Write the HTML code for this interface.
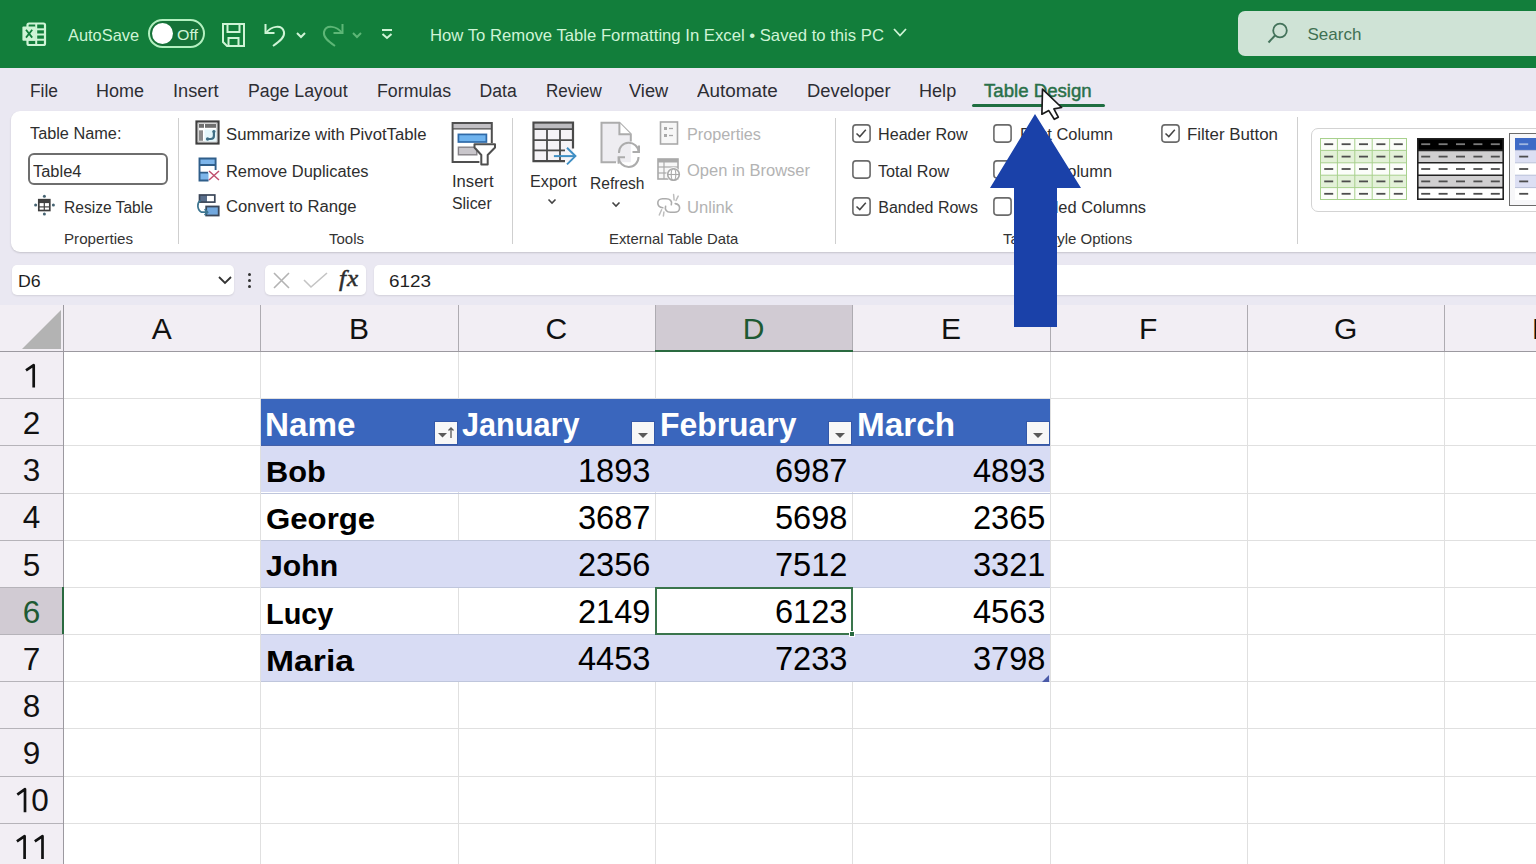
<!DOCTYPE html>
<html><head><meta charset="utf-8">
<style>
*{margin:0;padding:0;box-sizing:border-box}
html,body{width:1536px;height:864px;overflow:hidden;background:#fff;font-family:"Liberation Sans",sans-serif}
.a{position:absolute;white-space:nowrap}
svg.a{overflow:visible}
</style></head><body>
<div class="a" style="left:0;top:0;width:1536px;height:68px;background:#127e3b"></div>
<div class="a" style="left:0;top:68px;width:1536px;height:237px;background:#eae8f2"></div>
<div class="a" style="left:11px;top:111px;width:1560px;height:141px;background:#fff;border-radius:9px;box-shadow:0 1px 2px rgba(0,0,0,.16)"></div>
<svg class="a" style="left:20px;top:20px;" width="30" height="30" viewBox="0 0 30 30"><rect x="7.5" y="3.5" width="17.5" height="21.5" rx="1.5" fill="none" stroke="#cff4d6" stroke-width="2.2"/>
<line x1="7" y1="9.3" x2="25" y2="9.3" stroke="#cff4d6" stroke-width="2"/><line x1="7" y1="14.5" x2="25" y2="14.5" stroke="#cff4d6" stroke-width="2"/><line x1="7" y1="19.7" x2="25" y2="19.7" stroke="#cff4d6" stroke-width="2"/>
<line x1="16.2" y1="3" x2="16.2" y2="25" stroke="#cff4d6" stroke-width="2"/>
<rect x="2.4" y="6.6" width="13.4" height="14.2" rx="1" fill="#cff4d6"/>
<path d="M6 9.8 L12.2 17.6 M12.2 9.8 L6 17.6" stroke="#127e3b" stroke-width="1.8"/></svg>
<div class="a" style="left:68.00px;top:26.62px;font-size:16.4px;line-height:16.4px;color:#cff4d6;">AutoSave</div>
<div class="a" style="left:148px;top:19px;width:57px;height:29px;border:2px solid #b3f0c0;border-radius:15px;background:#157238"></div>
<div class="a" style="left:152px;top:23px;width:21px;height:21px;border-radius:50%;background:#fff"></div>
<div class="a" style="left:177.00px;top:27.18px;font-size:15.5px;line-height:15.5px;color:#cff4d6;transform:scaleX(1.0300);transform-origin:0 0;">Off</div>
<svg class="a" style="left:220px;top:21px;" width="28" height="28" viewBox="0 0 28 28"><path d="M3 3 H24 V25 H7 L3 21 Z" fill="none" stroke="#cff4d6" stroke-width="2"/><path d="M7.5 3 V11 H19.5 V3" fill="none" stroke="#cff4d6" stroke-width="2"/><path d="M8.5 25 V17 H18.5 V25" fill="none" stroke="#cff4d6" stroke-width="2"/></svg>
<svg class="a" style="left:262px;top:21px;" width="28" height="28" viewBox="0 0 28 28"><path d="M3.5 3 V12 H12.5" fill="none" stroke="#cff4d6" stroke-width="2"/><path d="M4 12 C9 5 20 3 22 11 C23 16 18 20 11 25" fill="none" stroke="#cff4d6" stroke-width="2"/></svg>
<svg class="a" style="left:294px;top:30px;" width="14" height="10" viewBox="0 0 14 10"><path d="M3 3 L7 7 L11 3" fill="none" stroke="#cff4d6" stroke-width="2"/></svg>
<svg class="a" style="left:319px;top:21px;" width="28" height="28" viewBox="0 0 28 28"><path d="M23.5 3 V12 H14.5" fill="none" stroke="#5db676" stroke-width="2"/><path d="M23 12 C18 5 7 3 5 11 C4 16 9 20 16 25" fill="none" stroke="#5db676" stroke-width="2"/></svg>
<svg class="a" style="left:350px;top:30px;" width="14" height="10" viewBox="0 0 14 10"><path d="M3 3 L7 7 L11 3" fill="none" stroke="#5db676" stroke-width="2"/></svg>
<svg class="a" style="left:379px;top:27px;" width="16" height="14" viewBox="0 0 16 14"><line x1="3" y1="3" x2="13" y2="3" stroke="#cff4d6" stroke-width="2"/><path d="M3.5 7 L8 11 L12.5 7" fill="none" stroke="#cff4d6" stroke-width="2"/></svg>
<div class="a" style="left:430.00px;top:26.63px;font-size:16.5px;line-height:16.5px;color:#cff4d6;transform:scaleX(1.0110);transform-origin:0 0;">How To Remove Table Formatting In Excel • Saved to this PC</div>
<svg class="a" style="left:891px;top:26px;" width="18" height="14" viewBox="0 0 18 14"><path d="M3 3 L9 9.5 L15 3" fill="none" stroke="#cff4d6" stroke-width="1.8"/></svg>
<div class="a" style="left:1238px;top:11px;width:320px;height:45px;background:#cfe3d6;border-radius:7px"></div>
<svg class="a" style="left:1264px;top:20px;" width="28" height="28" viewBox="0 0 28 28"><circle cx="16" cy="10.5" r="6.8" fill="none" stroke="#43725a" stroke-width="1.8"/><line x1="11" y1="15.5" x2="4.5" y2="22.5" stroke="#43725a" stroke-width="2"/></svg>
<div class="a" style="left:1307.50px;top:25.91px;font-size:17px;line-height:17px;color:#3f7052;">Search</div>
<div class="a" style="left:30.00px;top:82.90px;font-size:17.6px;line-height:17.6px;color:#2d2d33;transform:scaleX(0.9873);transform-origin:0 0;">File</div>
<div class="a" style="left:96.40px;top:82.90px;font-size:17.6px;line-height:17.6px;color:#2d2d33;transform:scaleX(1.0224);transform-origin:0 0;">Home</div>
<div class="a" style="left:173.00px;top:82.90px;font-size:17.6px;line-height:17.6px;color:#2d2d33;transform:scaleX(1.0337);transform-origin:0 0;">Insert</div>
<div class="a" style="left:248.00px;top:82.90px;font-size:17.6px;line-height:17.6px;color:#2d2d33;transform:scaleX(1.0077);transform-origin:0 0;">Page Layout</div>
<div class="a" style="left:376.60px;top:82.90px;font-size:17.6px;line-height:17.6px;color:#2d2d33;transform:scaleX(1.0102);transform-origin:0 0;">Formulas</div>
<div class="a" style="left:479.50px;top:82.90px;font-size:17.6px;line-height:17.6px;color:#2d2d33;">Data</div>
<div class="a" style="left:545.50px;top:82.90px;font-size:17.6px;line-height:17.6px;color:#2d2d33;transform:scaleX(0.9669);transform-origin:0 0;">Review</div>
<div class="a" style="left:628.90px;top:82.90px;font-size:17.6px;line-height:17.6px;color:#2d2d33;transform:scaleX(1.0362);transform-origin:0 0;">View</div>
<div class="a" style="left:696.60px;top:82.90px;font-size:17.6px;line-height:17.6px;color:#2d2d33;transform:scaleX(1.0725);transform-origin:0 0;">Automate</div>
<div class="a" style="left:806.90px;top:82.90px;font-size:17.6px;line-height:17.6px;color:#2d2d33;transform:scaleX(1.0433);transform-origin:0 0;">Developer</div>
<div class="a" style="left:919.30px;top:82.90px;font-size:17.6px;line-height:17.6px;color:#2d2d33;transform:scaleX(1.0277);transform-origin:0 0;">Help</div>
<div class="a" style="left:984.30px;top:82.90px;font-size:17.6px;line-height:17.6px;color:#2a7049;transform:scaleX(1.0584);transform-origin:0 0;-webkit-text-stroke:0.45px #2a7049;">Table Design</div>
<div class="a" style="left:972px;top:104px;width:133px;height:3px;background:#1f6e41;border-radius:2px"></div>
<div class="a" style="left:29.60px;top:126.46px;font-size:16px;line-height:16px;color:#2e2e2e;transform:scaleX(1.0176);transform-origin:0 0;">Table Name:</div>
<div class="a" style="left:28px;top:153px;width:140px;height:32px;border:2px solid #6e6e6e;border-radius:6px;background:#fff"></div>
<div class="a" style="left:33.20px;top:163.86px;font-size:16px;line-height:16px;color:#2e2e2e;transform:scaleX(1.0265);transform-origin:0 0;">Table4</div>
<svg class="a" style="left:32px;top:193px;" width="24" height="24" viewBox="0 0 24 24"><rect x="6.8" y="6.7" width="11" height="10.8" fill="#fff" stroke="#3f3f3f" stroke-width="1.7"/><rect x="6.8" y="6.7" width="11" height="3.4" fill="#3f3f3f"/><line x1="6.8" y1="13.9" x2="17.8" y2="13.9" stroke="#3f3f3f" stroke-width="1.2"/><line x1="12.3" y1="9.5" x2="12.3" y2="17.5" stroke="#3f3f3f" stroke-width="1.2"/><circle cx="12.4" cy="3.2" r="1.5" fill="#466473"/><circle cx="12.4" cy="21" r="1.5" fill="#466473"/><circle cx="3.6" cy="12.1" r="1.5" fill="#466473"/><circle cx="21.4" cy="12.1" r="1.5" fill="#466473"/></svg>
<div class="a" style="left:63.70px;top:200.06px;font-size:16px;line-height:16px;color:#2e2e2e;transform:scaleX(0.9725);transform-origin:0 0;">Resize Table</div>
<div class="a" style="left:63.70px;top:231.30px;font-size:15px;line-height:15px;color:#333;transform:scaleX(1.0093);transform-origin:0 0;">Properties</div>
<div class="a" style="left:178px;top:118px;width:1px;height:126px;background:#cfcfcf"></div>
<svg class="a" style="left:195px;top:120px;" width="26" height="26" viewBox="0 0 26 26"><rect x="1.5" y="1.5" width="22" height="22" fill="#fff" stroke="#3f3f3f" stroke-width="2.2"/><rect x="3.2" y="3.2" width="18.6" height="18.6" fill="none" stroke="#b9b9b9" stroke-width="0.8"/><rect x="9.5" y="9.5" width="12" height="12" fill="#e4f6fa"/><rect x="4" y="4" width="5" height="3.8" fill="#6f6f6f"/><rect x="10" y="4" width="11" height="3.8" fill="#6f6f6f"/><rect x="4" y="10.3" width="4" height="10.5" fill="#8a8a8a"/><path d="M18.9 11.5 V16 C18.9 18 17.5 19 15.5 19 H12.5" fill="none" stroke="#3f6e84" stroke-width="2.2" stroke-linecap="round"/><circle cx="12.6" cy="19" r="1.7" fill="#3f6e84"/><circle cx="18.9" cy="11.6" r="1.6" fill="#3f6e84"/></svg>
<div class="a" style="left:225.50px;top:127.26px;font-size:16px;line-height:16px;color:#2e2e2e;transform:scaleX(1.0439);transform-origin:0 0;">Summarize with PivotTable</div>
<svg class="a" style="left:197px;top:157px;" width="26" height="26" viewBox="0 0 26 26"><rect x="2.5" y="1.5" width="16.1" height="6.5" fill="#7db5ea"/><rect x="2.5" y="15.7" width="9" height="7.8" fill="#7db5ea"/><path d="M11.5 23.5 H2.5 V1.5 H18.6 V13" fill="none" stroke="#2f5e8a" stroke-width="1.9"/><path d="M2.5 8 H18.6 M2.5 15.7 H11" stroke="#2f5e8a" stroke-width="1.8"/><path d="M12 14 L22 23 M22 14 L12 23" stroke="#c0506e" stroke-width="1.5"/></svg>
<div class="a" style="left:225.50px;top:164.16px;font-size:16px;line-height:16px;color:#2e2e2e;transform:scaleX(1.0272);transform-origin:0 0;">Remove Duplicates</div>
<svg class="a" style="left:196px;top:193px;" width="26" height="26" viewBox="0 0 26 26"><rect x="3.5" y="2" width="7.5" height="7.1" fill="#5a6f8c"/><rect x="3.5" y="2" width="15.3" height="7.1" fill="none" stroke="#3a4658" stroke-width="1.7"/><rect x="10.2" y="13.5" width="12.5" height="9" fill="#72a8de" stroke="#3a4658" stroke-width="1.8"/><path d="M4.6 7.5 C0.8 9.5 0.8 16.5 5.5 19.2 H11.5" fill="none" stroke="#3d7590" stroke-width="1.7"/><path d="M8.6 16.2 L11.6 19.2 L8.6 22.2" fill="none" stroke="#3d7590" stroke-width="1.7"/></svg>
<div class="a" style="left:225.50px;top:199.16px;font-size:16px;line-height:16px;color:#2e2e2e;transform:scaleX(1.0406);transform-origin:0 0;">Convert to Range</div>
<svg class="a" style="left:450px;top:120px;" width="48" height="48" viewBox="0 0 48 48"><rect x="2.6" y="3" width="39.2" height="39.1" fill="#fff"/><rect x="3.4" y="3.8" width="37.6" height="5" fill="#c2c0c4"/><path d="M29.4 42.1 H2.6 V3 H41.8 V23" fill="none" stroke="#4f4f4f" stroke-width="2"/><line x1="2.6" y1="8.9" x2="41.8" y2="8.9" stroke="#4f4f4f" stroke-width="1.4"/><rect x="8.4" y="14.4" width="28" height="7.6" fill="#6fb3ee" stroke="#2f6aa8" stroke-width="1.7"/><rect x="8.4" y="27.2" width="18.4" height="7.6" fill="#c9c6cb" stroke="#858287" stroke-width="1.4"/><path d="M24.5 24.3 H45 V27.5 L37.7 35 V44.4 H31.3 V35 L24.5 27.5 Z" fill="#fff" stroke="#4f4f4f" stroke-width="2" stroke-linejoin="round"/></svg>
<div class="a" style="left:452.20px;top:173.96px;font-size:16px;line-height:16px;color:#2e2e2e;transform:scaleX(1.0371);transform-origin:0 0;">Insert</div>
<div class="a" style="left:452.20px;top:196.16px;font-size:16px;line-height:16px;color:#2e2e2e;transform:scaleX(0.9923);transform-origin:0 0;">Slicer</div>
<div class="a" style="left:329.00px;top:231.30px;font-size:15px;line-height:15px;color:#333;">Tools</div>
<div class="a" style="left:512px;top:118px;width:1px;height:126px;background:#cfcfcf"></div>
<svg class="a" style="left:531px;top:120px;" width="48" height="48" viewBox="0 0 48 48"><rect x="3.5" y="3.7" width="38.5" height="37.5" fill="#f5f3f7"/><rect x="3.5" y="3.7" width="38.5" height="5.2" fill="#bdbcc0"/><path d="M34 41.2 H2.5 V2.7 H42 V28.4" fill="none" stroke="#4a4a4a" stroke-width="2.2"/><line x1="2.5" y1="9.2" x2="42" y2="9.2" stroke="#4a4a4a" stroke-width="1.8"/><line x1="2.5" y1="20.2" x2="42" y2="20.2" stroke="#4a4a4a" stroke-width="1.8"/><line x1="2.5" y1="30.4" x2="34" y2="30.4" stroke="#4a4a4a" stroke-width="1.8"/><line x1="16" y1="9.2" x2="16" y2="41.2" stroke="#4a4a4a" stroke-width="1.8"/><line x1="29" y1="9.2" x2="29" y2="41.2" stroke="#4a4a4a" stroke-width="1.8"/><line x1="22.9" y1="36.1" x2="44" y2="36.1" stroke="#3f8fc4" stroke-width="2"/><path d="M36 27.8 L44.4 36.1 L36 44.4" fill="none" stroke="#3f8fc4" stroke-width="2"/></svg>
<div class="a" style="left:530.00px;top:173.96px;font-size:16px;line-height:16px;color:#2e2e2e;transform:scaleX(1.0120);transform-origin:0 0;">Export</div>
<svg class="a" style="left:546px;top:197px;" width="12" height="10" viewBox="0 0 12 10"><path d="M2.5 2.5 L6 6 L9.5 2.5" fill="none" stroke="#444" stroke-width="1.6"/></svg>
<svg class="a" style="left:598px;top:120px;" width="46" height="48" viewBox="0 0 46 48"><path d="M3.5 2.7 H21.4 L32.8 14.1 V42.2 H3.5 Z" fill="#eeedf1"/><path d="M18 42.2 H3.5 V2.7 H21.4 L32.8 14.1 V21.4" fill="none" stroke="#acacac" stroke-width="2"/><path d="M21.4 2.7 V14.3 H32.8" fill="#fff" stroke="#acacac" stroke-width="2"/><path d="M21 33 A9.8 9.8 0 0 1 40.6 32" fill="none" stroke="#acacac" stroke-width="2"/><path d="M34.5 32 H41 V25.5" fill="none" stroke="#acacac" stroke-width="2"/><path d="M40.5 37 A9.8 9.8 0 0 1 20.8 37.3" fill="none" stroke="#acacac" stroke-width="2"/><path d="M27 37.3 H20.6 V43.8" fill="none" stroke="#acacac" stroke-width="2"/></svg>
<div class="a" style="left:590.40px;top:176.06px;font-size:16px;line-height:16px;color:#2e2e2e;transform:scaleX(0.9728);transform-origin:0 0;">Refresh</div>
<svg class="a" style="left:610px;top:200px;" width="12" height="10" viewBox="0 0 12 10"><path d="M2.5 2.5 L6 6 L9.5 2.5" fill="none" stroke="#444" stroke-width="1.6"/></svg>
<svg class="a" style="left:658px;top:120px;" width="22" height="26" viewBox="0 0 22 26"><rect x="2.5" y="2" width="17" height="22" fill="#f7f7f7" stroke="#a9a9a9" stroke-width="1.6"/><rect x="6" y="7" width="3" height="3" fill="#a9a9a9"/><rect x="6" y="14" width="3" height="3" fill="#a9a9a9"/><line x1="11" y1="8.5" x2="15" y2="8.5" stroke="#a9a9a9" stroke-width="1.3"/><line x1="11" y1="15.5" x2="15" y2="15.5" stroke="#a9a9a9" stroke-width="1.3"/></svg>
<div class="a" style="left:686.70px;top:127.46px;font-size:16px;line-height:16px;color:#b3b3b3;transform:scaleX(1.0134);transform-origin:0 0;">Properties</div>
<svg class="a" style="left:656px;top:157px;" width="26" height="26" viewBox="0 0 26 26"><rect x="2" y="2" width="20" height="20" fill="#f7f7f7" stroke="#a9a9a9" stroke-width="1.6"/><rect x="2" y="2" width="20" height="3.5" fill="#a9a9a9"/><line x1="2" y1="10" x2="22" y2="10" stroke="#a9a9a9" stroke-width="1.2"/><line x1="2" y1="16" x2="22" y2="16" stroke="#a9a9a9" stroke-width="1.2"/><line x1="8" y1="5" x2="8" y2="22" stroke="#a9a9a9" stroke-width="1.2"/><circle cx="17.5" cy="17.5" r="7.2" fill="#fff"/><circle cx="17.5" cy="17.5" r="5.8" fill="#fff" stroke="#a9a9a9" stroke-width="1.6"/><ellipse cx="17.5" cy="17.5" rx="2.3" ry="5.8" fill="none" stroke="#a9a9a9" stroke-width="1.1"/><path d="M11.8 17.5 H23.2" stroke="#a9a9a9" stroke-width="1.1"/></svg>
<div class="a" style="left:686.70px;top:163.46px;font-size:16px;line-height:16px;color:#b3b3b3;transform:scaleX(1.0322);transform-origin:0 0;">Open in Browser</div>
<svg class="a" style="left:656px;top:193px;" width="26" height="26" viewBox="0 0 26 26"><path d="M15.3 11.8 C16.5 8 14 5.8 10 5.8 H6.5 C3.3 5.8 1.8 8 1.8 10 C1.8 12.5 3.5 14.3 6.8 14.8" fill="none" stroke="#acacac" stroke-width="1.6" stroke-linecap="round"/><path d="M9.6 13.2 C8.6 16.5 10.5 19.3 14.5 19.3 H18.5 C21.5 19.3 23.6 17.5 23.6 15 C23.6 12.5 22 11 19.2 10.6" fill="none" stroke="#acacac" stroke-width="1.6" stroke-linecap="round"/><path d="M17.6 1.5 L18.1 7 M22.2 3.1 L20 7.5 M3.3 22 L5.6 16.8 M7.4 23 L7.9 19" stroke="#bdbdbd" stroke-width="1.5" stroke-linecap="round"/></svg>
<div class="a" style="left:686.70px;top:200.16px;font-size:16px;line-height:16px;color:#b3b3b3;transform:scaleX(1.0368);transform-origin:0 0;">Unlink</div>
<div class="a" style="left:609.00px;top:231.30px;font-size:15px;line-height:15px;color:#333;transform:scaleX(0.9898);transform-origin:0 0;">External Table Data</div>
<div class="a" style="left:835px;top:118px;width:1px;height:126px;background:#cfcfcf"></div>
<svg class="a" style="left:851.5px;top:123.5px;" width="19" height="19" viewBox="0 0 19 19"><rect x="0.9" y="0.9" width="17.2" height="17.2" rx="3" fill="#fff" stroke="#6b6b6b" stroke-width="1.6"/><path d="M4.5 9.5 L7.8 12.6 L13.8 5.8" fill="none" stroke="#444" stroke-width="1.5"/></svg>
<div class="a" style="left:878.30px;top:127.46px;font-size:16px;line-height:16px;color:#2e2e2e;transform:scaleX(1.0086);transform-origin:0 0;">Header Row</div>
<svg class="a" style="left:851.5px;top:160.3px;" width="19" height="19" viewBox="0 0 19 19"><rect x="0.9" y="0.9" width="17.2" height="17.2" rx="3" fill="#fff" stroke="#6b6b6b" stroke-width="1.6"/></svg>
<div class="a" style="left:878.30px;top:164.16px;font-size:16px;line-height:16px;color:#2e2e2e;transform:scaleX(1.0121);transform-origin:0 0;">Total Row</div>
<svg class="a" style="left:851.5px;top:197px;" width="19" height="19" viewBox="0 0 19 19"><rect x="0.9" y="0.9" width="17.2" height="17.2" rx="3" fill="#fff" stroke="#6b6b6b" stroke-width="1.6"/><path d="M4.5 9.5 L7.8 12.6 L13.8 5.8" fill="none" stroke="#444" stroke-width="1.5"/></svg>
<div class="a" style="left:878.30px;top:200.46px;font-size:16px;line-height:16px;color:#2e2e2e;">Banded Rows</div>
<svg class="a" style="left:993px;top:123.5px;" width="19" height="19" viewBox="0 0 19 19"><rect x="0.9" y="0.9" width="17.2" height="17.2" rx="3" fill="#fff" stroke="#6b6b6b" stroke-width="1.6"/></svg>
<div class="a" style="left:1020.00px;top:127.46px;font-size:16px;line-height:16px;color:#2e2e2e;transform:scaleX(1.0256);transform-origin:0 0;">First Column</div>
<svg class="a" style="left:993px;top:160.3px;" width="19" height="19" viewBox="0 0 19 19"><rect x="0.9" y="0.9" width="17.2" height="17.2" rx="3" fill="#fff" stroke="#6b6b6b" stroke-width="1.6"/></svg>
<div class="a" style="left:1020.00px;top:164.16px;font-size:16px;line-height:16px;color:#2e2e2e;transform:scaleX(1.0242);transform-origin:0 0;">Last Column</div>
<svg class="a" style="left:993px;top:197px;" width="19" height="19" viewBox="0 0 19 19"><rect x="0.9" y="0.9" width="17.2" height="17.2" rx="3" fill="#fff" stroke="#6b6b6b" stroke-width="1.6"/></svg>
<div class="a" style="left:1020.00px;top:200.46px;font-size:16px;line-height:16px;color:#2e2e2e;transform:scaleX(1.0265);transform-origin:0 0;">Banded Columns</div>
<svg class="a" style="left:1161px;top:123.5px;" width="19" height="19" viewBox="0 0 19 19"><rect x="0.9" y="0.9" width="17.2" height="17.2" rx="3" fill="#fff" stroke="#6b6b6b" stroke-width="1.6"/><path d="M4.5 9.5 L7.8 12.6 L13.8 5.8" fill="none" stroke="#444" stroke-width="1.5"/></svg>
<div class="a" style="left:1187.00px;top:127.46px;font-size:16px;line-height:16px;color:#2e2e2e;transform:scaleX(1.0550);transform-origin:0 0;">Filter Button</div>
<div class="a" style="left:1003.00px;top:231.30px;font-size:15px;line-height:15px;color:#333;">Table Style Options</div>
<div class="a" style="left:1297px;top:117px;width:1px;height:127px;background:#cfcfcf"></div>
<div class="a" style="left:1311px;top:127.5px;width:260px;height:84.5px;border:1.5px solid #d3d3d3;border-radius:7px;background:#fff"></div>
<svg class="a" style="left:1320px;top:138px;" width="87" height="62" viewBox="0 0 87 62"><rect x="0" y="0.00" width="87" height="12.40" fill="#fbfdf9"/><rect x="0" y="12.40" width="87" height="12.40" fill="#e3f1d8"/><rect x="0" y="24.80" width="87" height="12.40" fill="#fbfdf9"/><rect x="0" y="37.20" width="87" height="12.40" fill="#e3f1d8"/><rect x="0" y="49.60" width="87" height="12.40" fill="#fbfdf9"/><line x1="0.50" y1="0" x2="0.50" y2="62" stroke="#a8d18d" stroke-width="1"/><line x1="0" y1="0.50" x2="87" y2="0.50" stroke="#a8d18d" stroke-width="1"/><line x1="17.40" y1="0" x2="17.40" y2="62" stroke="#a8d18d" stroke-width="1"/><line x1="0" y1="12.40" x2="87" y2="12.40" stroke="#a8d18d" stroke-width="1"/><line x1="34.80" y1="0" x2="34.80" y2="62" stroke="#a8d18d" stroke-width="1"/><line x1="0" y1="24.80" x2="87" y2="24.80" stroke="#a8d18d" stroke-width="1"/><line x1="52.20" y1="0" x2="52.20" y2="62" stroke="#a8d18d" stroke-width="1"/><line x1="0" y1="37.20" x2="87" y2="37.20" stroke="#a8d18d" stroke-width="1"/><line x1="69.60" y1="0" x2="69.60" y2="62" stroke="#a8d18d" stroke-width="1"/><line x1="0" y1="49.60" x2="87" y2="49.60" stroke="#a8d18d" stroke-width="1"/><line x1="86.50" y1="0" x2="86.50" y2="62" stroke="#a8d18d" stroke-width="1"/><line x1="0" y1="61.50" x2="87" y2="61.50" stroke="#a8d18d" stroke-width="1"/><line x1="4.20" y1="6.20" x2="13.20" y2="6.20" stroke="#4d4d4d" stroke-width="1.8"/><line x1="21.60" y1="6.20" x2="30.60" y2="6.20" stroke="#4d4d4d" stroke-width="1.8"/><line x1="39.00" y1="6.20" x2="48.00" y2="6.20" stroke="#4d4d4d" stroke-width="1.8"/><line x1="56.40" y1="6.20" x2="65.40" y2="6.20" stroke="#4d4d4d" stroke-width="1.8"/><line x1="73.80" y1="6.20" x2="82.80" y2="6.20" stroke="#4d4d4d" stroke-width="1.8"/><line x1="4.20" y1="18.60" x2="13.20" y2="18.60" stroke="#4d4d4d" stroke-width="1.8"/><line x1="21.60" y1="18.60" x2="30.60" y2="18.60" stroke="#4d4d4d" stroke-width="1.8"/><line x1="39.00" y1="18.60" x2="48.00" y2="18.60" stroke="#4d4d4d" stroke-width="1.8"/><line x1="56.40" y1="18.60" x2="65.40" y2="18.60" stroke="#4d4d4d" stroke-width="1.8"/><line x1="73.80" y1="18.60" x2="82.80" y2="18.60" stroke="#4d4d4d" stroke-width="1.8"/><line x1="4.20" y1="31.00" x2="13.20" y2="31.00" stroke="#4d4d4d" stroke-width="1.8"/><line x1="21.60" y1="31.00" x2="30.60" y2="31.00" stroke="#4d4d4d" stroke-width="1.8"/><line x1="39.00" y1="31.00" x2="48.00" y2="31.00" stroke="#4d4d4d" stroke-width="1.8"/><line x1="56.40" y1="31.00" x2="65.40" y2="31.00" stroke="#4d4d4d" stroke-width="1.8"/><line x1="73.80" y1="31.00" x2="82.80" y2="31.00" stroke="#4d4d4d" stroke-width="1.8"/><line x1="4.20" y1="43.40" x2="13.20" y2="43.40" stroke="#4d4d4d" stroke-width="1.8"/><line x1="21.60" y1="43.40" x2="30.60" y2="43.40" stroke="#4d4d4d" stroke-width="1.8"/><line x1="39.00" y1="43.40" x2="48.00" y2="43.40" stroke="#4d4d4d" stroke-width="1.8"/><line x1="56.40" y1="43.40" x2="65.40" y2="43.40" stroke="#4d4d4d" stroke-width="1.8"/><line x1="73.80" y1="43.40" x2="82.80" y2="43.40" stroke="#4d4d4d" stroke-width="1.8"/><line x1="4.20" y1="55.80" x2="13.20" y2="55.80" stroke="#4d4d4d" stroke-width="1.8"/><line x1="21.60" y1="55.80" x2="30.60" y2="55.80" stroke="#4d4d4d" stroke-width="1.8"/><line x1="39.00" y1="55.80" x2="48.00" y2="55.80" stroke="#4d4d4d" stroke-width="1.8"/><line x1="56.40" y1="55.80" x2="65.40" y2="55.80" stroke="#4d4d4d" stroke-width="1.8"/><line x1="73.80" y1="55.80" x2="82.80" y2="55.80" stroke="#4d4d4d" stroke-width="1.8"/></svg>
<svg class="a" style="left:1417px;top:138px;" width="87" height="62" viewBox="0 0 87 62"><rect x="0" y="0.00" width="87" height="12.40" fill="#000"/><rect x="0" y="12.40" width="87" height="12.40" fill="#d0cfd0"/><rect x="0" y="24.80" width="87" height="12.40" fill="#fff"/><rect x="0" y="37.20" width="87" height="12.40" fill="#d0cfd0"/><rect x="0" y="49.60" width="87" height="12.40" fill="#fff"/><line x1="0" y1="12.40" x2="87" y2="12.40" stroke="#222" stroke-width="1.6"/><line x1="0" y1="24.80" x2="87" y2="24.80" stroke="#222" stroke-width="1.6"/><line x1="0" y1="37.20" x2="87" y2="37.20" stroke="#222" stroke-width="1.6"/><line x1="0" y1="49.60" x2="87" y2="49.60" stroke="#222" stroke-width="1.6"/><rect x="0.8" y="0.8" width="85.4" height="60.4" fill="none" stroke="#222" stroke-width="1.6"/><line x1="4.20" y1="6.20" x2="13.20" y2="6.20" stroke="#7b7b7b" stroke-width="1.8"/><line x1="21.60" y1="6.20" x2="30.60" y2="6.20" stroke="#7b7b7b" stroke-width="1.8"/><line x1="39.00" y1="6.20" x2="48.00" y2="6.20" stroke="#7b7b7b" stroke-width="1.8"/><line x1="56.40" y1="6.20" x2="65.40" y2="6.20" stroke="#7b7b7b" stroke-width="1.8"/><line x1="73.80" y1="6.20" x2="82.80" y2="6.20" stroke="#7b7b7b" stroke-width="1.8"/><line x1="4.20" y1="18.60" x2="13.20" y2="18.60" stroke="#4d4d4d" stroke-width="1.8"/><line x1="21.60" y1="18.60" x2="30.60" y2="18.60" stroke="#4d4d4d" stroke-width="1.8"/><line x1="39.00" y1="18.60" x2="48.00" y2="18.60" stroke="#4d4d4d" stroke-width="1.8"/><line x1="56.40" y1="18.60" x2="65.40" y2="18.60" stroke="#4d4d4d" stroke-width="1.8"/><line x1="73.80" y1="18.60" x2="82.80" y2="18.60" stroke="#4d4d4d" stroke-width="1.8"/><line x1="4.20" y1="31.00" x2="13.20" y2="31.00" stroke="#4d4d4d" stroke-width="1.8"/><line x1="21.60" y1="31.00" x2="30.60" y2="31.00" stroke="#4d4d4d" stroke-width="1.8"/><line x1="39.00" y1="31.00" x2="48.00" y2="31.00" stroke="#4d4d4d" stroke-width="1.8"/><line x1="56.40" y1="31.00" x2="65.40" y2="31.00" stroke="#4d4d4d" stroke-width="1.8"/><line x1="73.80" y1="31.00" x2="82.80" y2="31.00" stroke="#4d4d4d" stroke-width="1.8"/><line x1="4.20" y1="43.40" x2="13.20" y2="43.40" stroke="#4d4d4d" stroke-width="1.8"/><line x1="21.60" y1="43.40" x2="30.60" y2="43.40" stroke="#4d4d4d" stroke-width="1.8"/><line x1="39.00" y1="43.40" x2="48.00" y2="43.40" stroke="#4d4d4d" stroke-width="1.8"/><line x1="56.40" y1="43.40" x2="65.40" y2="43.40" stroke="#4d4d4d" stroke-width="1.8"/><line x1="73.80" y1="43.40" x2="82.80" y2="43.40" stroke="#4d4d4d" stroke-width="1.8"/><line x1="4.20" y1="55.80" x2="13.20" y2="55.80" stroke="#4d4d4d" stroke-width="1.8"/><line x1="21.60" y1="55.80" x2="30.60" y2="55.80" stroke="#4d4d4d" stroke-width="1.8"/><line x1="39.00" y1="55.80" x2="48.00" y2="55.80" stroke="#4d4d4d" stroke-width="1.8"/><line x1="56.40" y1="55.80" x2="65.40" y2="55.80" stroke="#4d4d4d" stroke-width="1.8"/><line x1="73.80" y1="55.80" x2="82.80" y2="55.80" stroke="#4d4d4d" stroke-width="1.8"/></svg>
<div class="a" style="left:1509px;top:133px;width:60px;height:73px;border:1.6px solid #6b6b6b;background:#f7f7f9"></div>
<svg class="a" style="left:1515px;top:138px;" width="87" height="62" viewBox="0 0 87 62"><rect x="0" y="0.00" width="87" height="12.40" fill="#3e6ac6"/><rect x="0" y="12.40" width="87" height="12.40" fill="#dcdff3"/><rect x="0" y="24.80" width="87" height="12.40" fill="#fff"/><rect x="0" y="37.20" width="87" height="12.40" fill="#dcdff3"/><rect x="0" y="49.60" width="87" height="12.40" fill="#fff"/><line x1="0" y1="12.40" x2="87" y2="12.40" stroke="#b9c0d8" stroke-width="1"/><line x1="0" y1="24.80" x2="87" y2="24.80" stroke="#b9c0d8" stroke-width="1"/><line x1="0" y1="37.20" x2="87" y2="37.20" stroke="#b9c0d8" stroke-width="1"/><line x1="0" y1="49.60" x2="87" y2="49.60" stroke="#b9c0d8" stroke-width="1"/><line x1="4.20" y1="6.20" x2="13.20" y2="6.20" stroke="#9fb6e0" stroke-width="1.8"/><line x1="21.60" y1="6.20" x2="30.60" y2="6.20" stroke="#9fb6e0" stroke-width="1.8"/><line x1="39.00" y1="6.20" x2="48.00" y2="6.20" stroke="#9fb6e0" stroke-width="1.8"/><line x1="56.40" y1="6.20" x2="65.40" y2="6.20" stroke="#9fb6e0" stroke-width="1.8"/><line x1="73.80" y1="6.20" x2="82.80" y2="6.20" stroke="#9fb6e0" stroke-width="1.8"/><line x1="4.20" y1="18.60" x2="13.20" y2="18.60" stroke="#4d4d4d" stroke-width="1.8"/><line x1="21.60" y1="18.60" x2="30.60" y2="18.60" stroke="#4d4d4d" stroke-width="1.8"/><line x1="39.00" y1="18.60" x2="48.00" y2="18.60" stroke="#4d4d4d" stroke-width="1.8"/><line x1="56.40" y1="18.60" x2="65.40" y2="18.60" stroke="#4d4d4d" stroke-width="1.8"/><line x1="73.80" y1="18.60" x2="82.80" y2="18.60" stroke="#4d4d4d" stroke-width="1.8"/><line x1="4.20" y1="31.00" x2="13.20" y2="31.00" stroke="#4d4d4d" stroke-width="1.8"/><line x1="21.60" y1="31.00" x2="30.60" y2="31.00" stroke="#4d4d4d" stroke-width="1.8"/><line x1="39.00" y1="31.00" x2="48.00" y2="31.00" stroke="#4d4d4d" stroke-width="1.8"/><line x1="56.40" y1="31.00" x2="65.40" y2="31.00" stroke="#4d4d4d" stroke-width="1.8"/><line x1="73.80" y1="31.00" x2="82.80" y2="31.00" stroke="#4d4d4d" stroke-width="1.8"/><line x1="4.20" y1="43.40" x2="13.20" y2="43.40" stroke="#4d4d4d" stroke-width="1.8"/><line x1="21.60" y1="43.40" x2="30.60" y2="43.40" stroke="#4d4d4d" stroke-width="1.8"/><line x1="39.00" y1="43.40" x2="48.00" y2="43.40" stroke="#4d4d4d" stroke-width="1.8"/><line x1="56.40" y1="43.40" x2="65.40" y2="43.40" stroke="#4d4d4d" stroke-width="1.8"/><line x1="73.80" y1="43.40" x2="82.80" y2="43.40" stroke="#4d4d4d" stroke-width="1.8"/><line x1="4.20" y1="55.80" x2="13.20" y2="55.80" stroke="#4d4d4d" stroke-width="1.8"/><line x1="21.60" y1="55.80" x2="30.60" y2="55.80" stroke="#4d4d4d" stroke-width="1.8"/><line x1="39.00" y1="55.80" x2="48.00" y2="55.80" stroke="#4d4d4d" stroke-width="1.8"/><line x1="56.40" y1="55.80" x2="65.40" y2="55.80" stroke="#4d4d4d" stroke-width="1.8"/><line x1="73.80" y1="55.80" x2="82.80" y2="55.80" stroke="#4d4d4d" stroke-width="1.8"/></svg>
<div class="a" style="left:12px;top:265px;width:222px;height:30px;background:#fff;border-radius:5px;box-shadow:0 1px 2px rgba(0,0,0,.1)"></div>
<div class="a" style="left:17.80px;top:274.46px;font-size:16px;line-height:16px;color:#1f1f1f;transform:scaleX(1.1098);transform-origin:0 0;">D6</div>
<svg class="a" style="left:215px;top:272px;" width="20" height="16" viewBox="0 0 20 16"><path d="M4 5 L10 11 L16 5" fill="none" stroke="#333" stroke-width="1.8"/></svg>
<div class="a" style="left:248px;top:273px;width:3px;height:3px;border-radius:50%;background:#333"></div>
<div class="a" style="left:248px;top:279px;width:3px;height:3px;border-radius:50%;background:#333"></div>
<div class="a" style="left:248px;top:285px;width:3px;height:3px;border-radius:50%;background:#333"></div>
<div class="a" style="left:265px;top:265px;width:101px;height:30px;background:#fff;border-radius:5px;box-shadow:0 1px 2px rgba(0,0,0,.1)"></div>
<svg class="a" style="left:270px;top:270px;" width="24" height="22" viewBox="0 0 24 22"><path d="M4 3 L19 18 M19 3 L4 18" stroke="#b3b3b3" stroke-width="1.6"/></svg>
<svg class="a" style="left:301px;top:270px;" width="30" height="22" viewBox="0 0 30 22"><path d="M3 10 L10 17 L26 3" fill="none" stroke="#c4c4c4" stroke-width="1.6"/></svg>
<div class="a" style="left:339px;top:266px;font-size:24px;line-height:24px;font-family:'Liberation Serif',serif;font-style:italic;color:#2d2d2d;-webkit-text-stroke:0.5px #2d2d2d;transform:scaleX(1.05);transform-origin:0 0">f<span style="margin-left:1px">x</span></div>
<div class="a" style="left:374px;top:265px;width:1170px;height:30px;background:#fff;border-radius:5px;box-shadow:0 1px 2px rgba(0,0,0,.1)"></div>
<div class="a" style="left:388.80px;top:274.46px;font-size:16px;line-height:16px;color:#1f1f1f;transform:scaleX(1.1799);transform-origin:0 0;">6123</div>
<div class="a" style="left:0;top:305px;width:1536px;height:559px;background:#fff"></div>
<div class="a" style="left:0;top:305px;width:1536px;height:46px;background:#f2eef4"></div>
<div class="a" style="left:0;top:351px;width:63px;height:520px;background:#f2eef4"></div>
<div class="a" style="left:655px;top:305px;width:197.3px;height:46px;background:#d1cbd3"></div>
<div class="a" style="left:0;top:586.9px;width:63px;height:47.2px;background:#d1cbd3"></div>
<svg class="a" style="left:0px;top:305px;" width="63" height="46" viewBox="0 0 63 46"><path d="M61 5 L61 44 L22 44 Z" fill="#b3b3b3"/></svg>
<div class="a" style="left:260px;top:351px;width:1px;height:520px;background:#e0e0e0"></div>
<div class="a" style="left:260px;top:305px;width:1px;height:46px;background:#aeabb1"></div>
<div class="a" style="left:458px;top:351px;width:1px;height:520px;background:#e0e0e0"></div>
<div class="a" style="left:458px;top:305px;width:1px;height:46px;background:#aeabb1"></div>
<div class="a" style="left:655px;top:351px;width:1px;height:520px;background:#e0e0e0"></div>
<div class="a" style="left:655px;top:305px;width:1px;height:46px;background:#aeabb1"></div>
<div class="a" style="left:852px;top:351px;width:1px;height:520px;background:#e0e0e0"></div>
<div class="a" style="left:852px;top:305px;width:1px;height:46px;background:#aeabb1"></div>
<div class="a" style="left:1050px;top:351px;width:1px;height:520px;background:#e0e0e0"></div>
<div class="a" style="left:1050px;top:305px;width:1px;height:46px;background:#aeabb1"></div>
<div class="a" style="left:1247px;top:351px;width:1px;height:520px;background:#e0e0e0"></div>
<div class="a" style="left:1247px;top:305px;width:1px;height:46px;background:#aeabb1"></div>
<div class="a" style="left:1444px;top:351px;width:1px;height:520px;background:#e0e0e0"></div>
<div class="a" style="left:1444px;top:305px;width:1px;height:46px;background:#aeabb1"></div>
<div class="a" style="left:1642px;top:351px;width:1px;height:520px;background:#e0e0e0"></div>
<div class="a" style="left:1642px;top:305px;width:1px;height:46px;background:#aeabb1"></div>
<div class="a" style="left:63px;top:398px;width:1480px;height:1px;background:#e0e0e0"></div>
<div class="a" style="left:0;top:398px;width:63px;height:1px;background:#b6b3b9"></div>
<div class="a" style="left:63px;top:445px;width:1480px;height:1px;background:#e0e0e0"></div>
<div class="a" style="left:0;top:445px;width:63px;height:1px;background:#b6b3b9"></div>
<div class="a" style="left:63px;top:493px;width:1480px;height:1px;background:#e0e0e0"></div>
<div class="a" style="left:0;top:493px;width:63px;height:1px;background:#b6b3b9"></div>
<div class="a" style="left:63px;top:540px;width:1480px;height:1px;background:#e0e0e0"></div>
<div class="a" style="left:0;top:540px;width:63px;height:1px;background:#b6b3b9"></div>
<div class="a" style="left:63px;top:587px;width:1480px;height:1px;background:#e0e0e0"></div>
<div class="a" style="left:0;top:587px;width:63px;height:1px;background:#b6b3b9"></div>
<div class="a" style="left:63px;top:634px;width:1480px;height:1px;background:#e0e0e0"></div>
<div class="a" style="left:0;top:634px;width:63px;height:1px;background:#b6b3b9"></div>
<div class="a" style="left:63px;top:681px;width:1480px;height:1px;background:#e0e0e0"></div>
<div class="a" style="left:0;top:681px;width:63px;height:1px;background:#b6b3b9"></div>
<div class="a" style="left:63px;top:728px;width:1480px;height:1px;background:#e0e0e0"></div>
<div class="a" style="left:0;top:728px;width:63px;height:1px;background:#b6b3b9"></div>
<div class="a" style="left:63px;top:776px;width:1480px;height:1px;background:#e0e0e0"></div>
<div class="a" style="left:0;top:776px;width:63px;height:1px;background:#b6b3b9"></div>
<div class="a" style="left:63px;top:823px;width:1480px;height:1px;background:#e0e0e0"></div>
<div class="a" style="left:0;top:823px;width:63px;height:1px;background:#b6b3b9"></div>
<div class="a" style="left:63px;top:870px;width:1480px;height:1px;background:#e0e0e0"></div>
<div class="a" style="left:0;top:870px;width:63px;height:1px;background:#b6b3b9"></div>
<div class="a" style="left:0;top:351px;width:1536px;height:1px;background:#9c99a0"></div>
<div class="a" style="left:63px;top:305px;width:1px;height:600px;background:#9c99a0"></div>
<div class="a" style="left:655px;top:350px;width:198px;height:2px;background:#2a6a40"></div>
<div class="a" style="left:62px;top:586.9px;width:2px;height:47.2px;background:#2a6a40"></div>
<div class="a" style="left:151.69px;top:314.41px;font-size:30px;line-height:30px;color:#111;">A</div>
<div class="a" style="left:349.04px;top:314.41px;font-size:30px;line-height:30px;color:#111;">B</div>
<div class="a" style="left:545.52px;top:314.41px;font-size:30px;line-height:30px;color:#111;">C</div>
<div class="a" style="left:742.82px;top:314.41px;font-size:30px;line-height:30px;color:#1e5a33;">D</div>
<div class="a" style="left:940.94px;top:314.41px;font-size:30px;line-height:30px;color:#111;">E</div>
<div class="a" style="left:1139.09px;top:314.41px;font-size:30px;line-height:30px;color:#111;">F</div>
<div class="a" style="left:1333.88px;top:314.41px;font-size:30px;line-height:30px;color:#111;">G</div>
<div class="a" style="left:1532.02px;top:314.41px;font-size:30px;line-height:30px;color:#111;">H</div>
<svg class="a" style="left:23px;top:362px;" width="16" height="28" viewBox="0 0 16 28"><path d="M3.00 8.40 L10.70 3.20 V25.60" fill="none" stroke="#111" stroke-width="2.7" stroke-linejoin="round"/></svg>
<div class="a" style="left:22.74px;top:408.09px;font-size:31.5px;line-height:31.5px;color:#111;">2</div>
<div class="a" style="left:22.74px;top:455.26px;font-size:31.5px;line-height:31.5px;color:#111;">3</div>
<div class="a" style="left:22.74px;top:502.43px;font-size:31.5px;line-height:31.5px;color:#111;">4</div>
<div class="a" style="left:22.74px;top:549.60px;font-size:31.5px;line-height:31.5px;color:#111;">5</div>
<div class="a" style="left:22.74px;top:596.77px;font-size:31.5px;line-height:31.5px;color:#1e5a33;">6</div>
<div class="a" style="left:22.74px;top:643.94px;font-size:31.5px;line-height:31.5px;color:#111;">7</div>
<div class="a" style="left:22.74px;top:691.11px;font-size:31.5px;line-height:31.5px;color:#111;">8</div>
<div class="a" style="left:22.74px;top:738.28px;font-size:31.5px;line-height:31.5px;color:#111;">9</div>
<svg class="a" style="left:14px;top:786px;" width="16" height="28" viewBox="0 0 16 28"><path d="M3.30 8.70 L11.00 3.20 V26.20" fill="none" stroke="#111" stroke-width="2.7" stroke-linejoin="round"/></svg>
<div class="a" style="left:31.20px;top:785.45px;font-size:31.5px;line-height:31.5px;color:#111;">0</div>
<svg class="a" style="left:14px;top:833px;" width="16" height="28" viewBox="0 0 16 28"><path d="M2.90 8.40 L10.60 3.20 V26.00" fill="none" stroke="#111" stroke-width="2.7" stroke-linejoin="round"/></svg>
<svg class="a" style="left:32px;top:833px;" width="16" height="28" viewBox="0 0 16 28"><path d="M2.80 8.40 L10.50 3.20 V26.00" fill="none" stroke="#111" stroke-width="2.7" stroke-linejoin="round"/></svg>
<div class="a" style="left:261.4px;top:399.2px;width:788.2px;height:46.2px;background:#3a66bd"></div>
<div class="a" style="left:261.4px;top:446.3px;width:788.2px;height:46.2px;background:#d8dcf4"></div>
<div class="a" style="left:261.4px;top:540.7px;width:788.2px;height:46.2px;background:#d8dcf4"></div>
<div class="a" style="left:261.4px;top:635.0px;width:788.2px;height:46.2px;background:#d8dcf4"></div>
<div class="a" style="left:261.4px;top:493px;width:788.2px;height:1px;background:#bfc6dc"></div>
<div class="a" style="left:261.4px;top:540px;width:788.2px;height:1px;background:#bfc6dc"></div>
<div class="a" style="left:261.4px;top:587px;width:788.2px;height:1px;background:#bfc6dc"></div>
<div class="a" style="left:261.4px;top:634px;width:788.2px;height:1px;background:#bfc6dc"></div>
<div class="a" style="left:261.4px;top:681px;width:788.2px;height:1px;background:#bfc6dc"></div>
<div class="a" style="left:261.4px;top:445px;width:788.2px;height:1px;background:#4560a8"></div>
<div class="a" style="left:265.20px;top:407.87px;font-size:33px;line-height:33px;color:#fff;font-weight:bold;transform:scaleX(1.0069);transform-origin:0 0;">Name</div>
<svg class="a" style="left:434px;top:421px;" width="24" height="24" viewBox="0 0 24 24"><rect x="0.5" y="0.5" width="23" height="23" fill="#f7f7f7" stroke="#3358a8" stroke-width="1"/><path d="M4 12 L8.5 16.5 L13 12 Z" fill="#595959"/><path d="M17 17 V7 M14.5 9.5 L17 7 L19.5 9.5" fill="none" stroke="#595959" stroke-width="1.3"/></svg>
<div class="a" style="left:462.00px;top:407.87px;font-size:33px;line-height:33px;color:#fff;font-weight:bold;transform:scaleX(0.9283);transform-origin:0 0;">January</div>
<svg class="a" style="left:631px;top:421px;" width="24" height="24" viewBox="0 0 24 24"><rect x="0.5" y="0.5" width="23" height="23" fill="#f7f7f7" stroke="#3358a8" stroke-width="1"/><path d="M7 12 L12 17 L17 12 Z" fill="#595959"/></svg>
<div class="a" style="left:659.80px;top:407.87px;font-size:33px;line-height:33px;color:#fff;font-weight:bold;transform:scaleX(0.9666);transform-origin:0 0;">February</div>
<svg class="a" style="left:828px;top:421px;" width="24" height="24" viewBox="0 0 24 24"><rect x="0.5" y="0.5" width="23" height="23" fill="#f7f7f7" stroke="#3358a8" stroke-width="1"/><path d="M7 12 L12 17 L17 12 Z" fill="#595959"/></svg>
<div class="a" style="left:857.20px;top:407.87px;font-size:33px;line-height:33px;color:#fff;font-weight:bold;transform:scaleX(1.0083);transform-origin:0 0;">March</div>
<svg class="a" style="left:1026px;top:421px;" width="24" height="24" viewBox="0 0 24 24"><rect x="0.5" y="0.5" width="23" height="23" fill="#f7f7f7" stroke="#3358a8" stroke-width="1"/><path d="M7 12 L12 17 L17 12 Z" fill="#595959"/></svg>
<div class="a" style="left:266.20px;top:457.03px;font-size:30px;line-height:30px;color:#000;font-weight:bold;transform:scaleX(1.0255);transform-origin:0 0;">Bob</div>
<div class="a" style="left:577.90px;top:453.79px;font-size:33px;line-height:33px;color:#000;transform:scaleX(0.9875);transform-origin:0 0;">1893</div>
<div class="a" style="left:775.20px;top:453.79px;font-size:33px;line-height:33px;color:#000;transform:scaleX(0.9875);transform-origin:0 0;">6987</div>
<div class="a" style="left:972.50px;top:453.79px;font-size:33px;line-height:33px;color:#000;transform:scaleX(0.9875);transform-origin:0 0;">4893</div>
<div class="a" style="left:266.20px;top:504.20px;font-size:30px;line-height:30px;color:#000;font-weight:bold;transform:scaleX(1.0396);transform-origin:0 0;">George</div>
<div class="a" style="left:577.90px;top:500.96px;font-size:33px;line-height:33px;color:#000;transform:scaleX(0.9875);transform-origin:0 0;">3687</div>
<div class="a" style="left:775.20px;top:500.96px;font-size:33px;line-height:33px;color:#000;transform:scaleX(0.9875);transform-origin:0 0;">5698</div>
<div class="a" style="left:972.50px;top:500.96px;font-size:33px;line-height:33px;color:#000;transform:scaleX(0.9875);transform-origin:0 0;">2365</div>
<div class="a" style="left:266.20px;top:551.37px;font-size:30px;line-height:30px;color:#000;font-weight:bold;transform:scaleX(1.0059);transform-origin:0 0;">John</div>
<div class="a" style="left:577.90px;top:548.13px;font-size:33px;line-height:33px;color:#000;transform:scaleX(0.9875);transform-origin:0 0;">2356</div>
<div class="a" style="left:775.20px;top:548.13px;font-size:33px;line-height:33px;color:#000;transform:scaleX(0.9875);transform-origin:0 0;">7512</div>
<div class="a" style="left:972.50px;top:548.13px;font-size:33px;line-height:33px;color:#000;transform:scaleX(0.9875);transform-origin:0 0;">3321</div>
<div class="a" style="left:266.20px;top:598.54px;font-size:30px;line-height:30px;color:#000;font-weight:bold;transform:scaleX(0.9627);transform-origin:0 0;">Lucy</div>
<div class="a" style="left:577.90px;top:595.30px;font-size:33px;line-height:33px;color:#000;transform:scaleX(0.9875);transform-origin:0 0;">2149</div>
<div class="a" style="left:775.20px;top:595.30px;font-size:33px;line-height:33px;color:#000;transform:scaleX(0.9875);transform-origin:0 0;">6123</div>
<div class="a" style="left:972.50px;top:595.30px;font-size:33px;line-height:33px;color:#000;transform:scaleX(0.9875);transform-origin:0 0;">4563</div>
<div class="a" style="left:266.20px;top:645.71px;font-size:30px;line-height:30px;color:#000;font-weight:bold;transform:scaleX(1.1224);transform-origin:0 0;">Maria</div>
<div class="a" style="left:577.90px;top:642.47px;font-size:33px;line-height:33px;color:#000;transform:scaleX(0.9875);transform-origin:0 0;">4453</div>
<div class="a" style="left:775.20px;top:642.47px;font-size:33px;line-height:33px;color:#000;transform:scaleX(0.9875);transform-origin:0 0;">7233</div>
<div class="a" style="left:972.50px;top:642.47px;font-size:33px;line-height:33px;color:#000;transform:scaleX(0.9875);transform-origin:0 0;">3798</div>
<div class="a" style="left:655px;top:587px;width:198px;height:48px;border:2px solid #3a754c"></div>
<div class="a" style="left:849px;top:631px;width:6px;height:6px;background:#2a6a40;border:1px solid #fff"></div>
<svg class="a" style="left:1041px;top:674px;" width="9" height="9" viewBox="0 0 9 9"><path d="M8 1 V8 H1 Z" fill="#4a5aa8"/></svg>
<svg class="a" style="left:985px;top:110px;" width="100" height="220" viewBox="0 0 100 220"><path d="M50 4 L96 78 L72 78 L72 217 L29 217 L29 78 L5 78 Z" fill="#1a41a9"/></svg>
<svg class="a" style="left:1038px;top:86px;" width="30" height="38" viewBox="0 0 30 38"><path d="M4.5 3.1 L3.9 28.2 L10.8 24.6 L16.3 33.3 L20.3 31.2 L15.9 22.9 L23.6 21.5 Z" fill="#fff" stroke="#1a1a1a" stroke-width="1.7" stroke-linejoin="round"/></svg>
</body></html>
